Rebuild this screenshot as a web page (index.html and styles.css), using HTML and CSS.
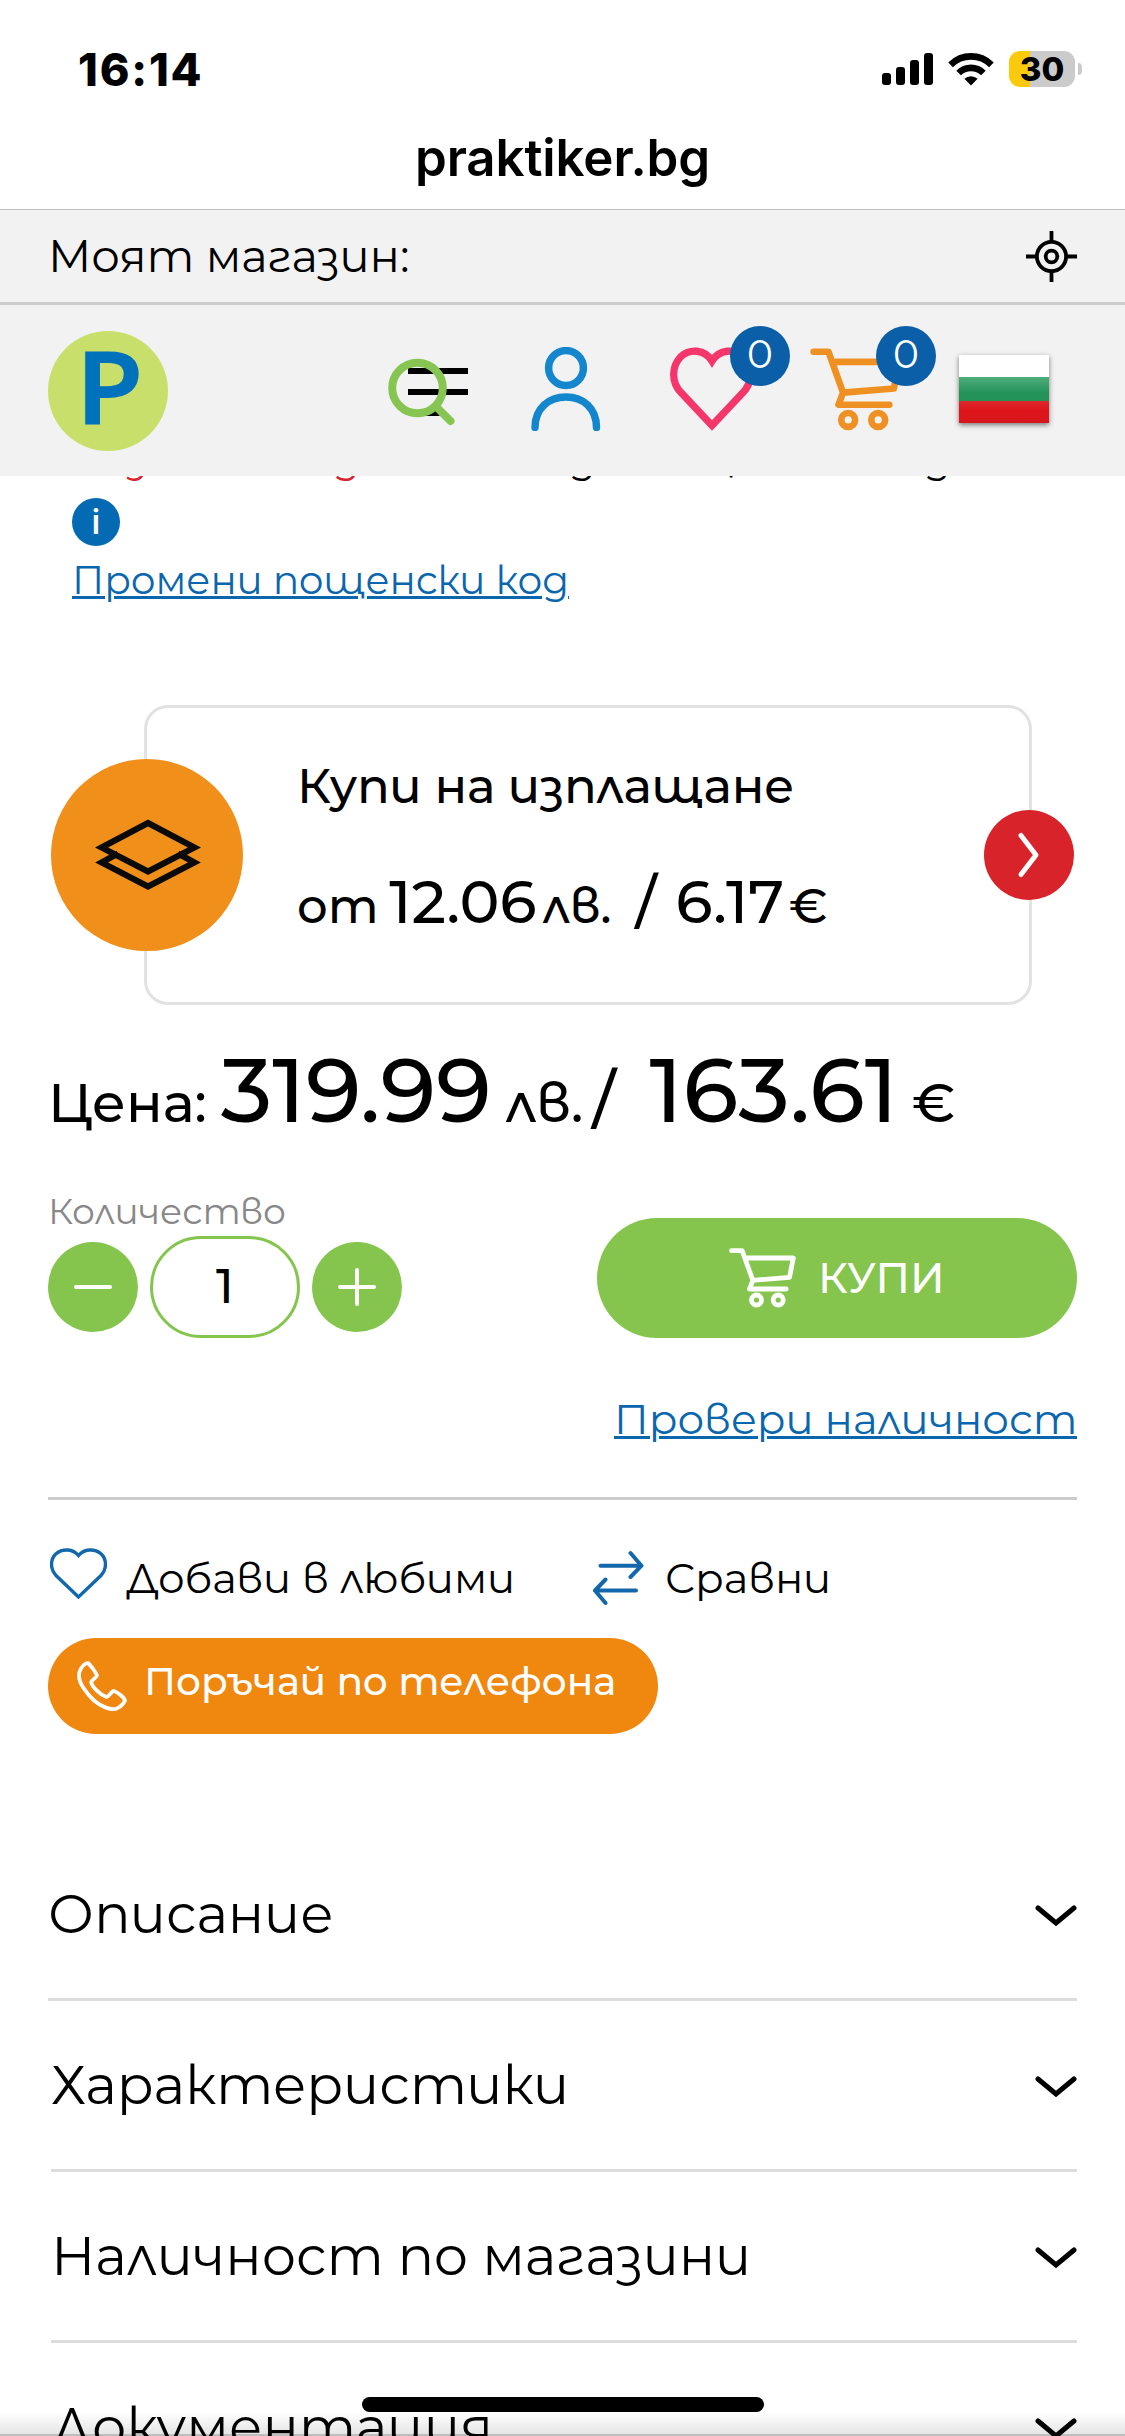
FILE: index.html
```html
<!DOCTYPE html>
<html lang="bg">
<head>
<meta charset="utf-8">
<title>praktiker.bg</title>
<link rel="stylesheet" href="styles.css">
</head>
<body>
<svg class="defs" aria-hidden="true">
  <symbol id="cart" viewBox="0 0 67 60">
    <g fill="none" stroke="currentColor" stroke-width="4.8" stroke-linecap="round" stroke-linejoin="round">
      <path d="M2.5 2.700H13.200L23.800 32.300L60.500 29.300L64.300 10H16.800M23.800 32.300L20.500 41H57.200"/>
      <circle cx="27.500" cy="52" r="5"/><circle cx="49.200" cy="52" r="5"/>
    </g>
  </symbol>
  <symbol id="down" viewBox="0 0 42 22">
    <path d="M3 3L21 18L39 3" fill="none" stroke="#000" stroke-width="5" stroke-linecap="round" stroke-linejoin="miter"/>
  </symbol>
</svg>

<div class="screen">
  <div class="status">
    <span class="clock">16:14</span>
    <div class="status-icons">
      <svg width="51" height="32" viewBox="0 0 51 32"><rect x="0" y="20" width="9" height="12" rx="3"/><rect x="14" y="14" width="9" height="18" rx="3"/><rect x="28" y="7" width="9" height="25" rx="3"/><rect x="42" y="0" width="9" height="32" rx="3"/></svg>
      <svg class="wifi" width="46" height="34" viewBox="0 0 46 34"><g fill="none" stroke="#000" stroke-width="6.6"><path d="M2.6 12.8A29 29 0 0 1 43.4 12.8"/><path d="M10.6 21A17.6 17.6 0 0 1 35.4 21"/></g><path d="M23 33.5L16.4 26.8A9.6 9.6 0 0 1 29.6 26.8Z"/></svg>
      <div class="battery"><span>30</span></div>
      <div class="nub"></div>
    </div>
  </div>
  <div class="url">praktiker.bg</div>

  <div class="store">
    <span>Моят магазин:</span>
    <svg width="51" height="51" viewBox="0 0 51 51" fill="none" stroke="#000" stroke-width="3.8"><circle cx="25.5" cy="25.5" r="14.6"/><circle cx="25.5" cy="25.5" r="5.8"/><path d="M25.5 0V10M25.5 41V51M0 25.5H10M41 25.5H51"/></svg>
  </div>

  <header class="header">
    <div class="logo"><span>P</span></div>
    <svg class="i-search" width="84" height="84" viewBox="386 347 84 84"><path d="M408 367H468V373H408ZM408 388H468V394H408ZM425 415H440L436 409Z"/><g fill="none" stroke="#86c552" stroke-width="8" stroke-linecap="round"><circle cx="417.5" cy="387" r="25.3"/><path d="M436.5 406L450.5 420"/></g></svg>
    <svg class="i-user" width="70" height="84" viewBox="531 347 70 84" fill="none" stroke="#1486cd" stroke-width="7.5" stroke-linecap="round"><circle cx="566" cy="368" r="17.4"/><path d="M535 427.5C535 408 549 397 566 397C583 397 596.500 408 596.500 427.500"/></svg>
    <div class="with-badge i-heart">
      <svg width="84" height="84" viewBox="0 0 84 84" fill="none" stroke="#f5366a" stroke-width="7.3"><path d="M42 78.500L11 45.500C1 35 1.500 19 11 9.500C20 1.500 34.500 2 42 14C49.500 2 64 1.500 73 9.500C82.500 19 83 35 73 45.500Z"/></svg>
      <span class="badge">0</span>
    </div>
    <div class="with-badge i-cart">
      <svg width="93" height="83"><use href="#cart"/></svg>
      <span class="badge">0</span>
    </div>
    <div class="flag"></div>
  </header>

  <main class="main">
    <div class="delivery"><p><b class="w1">з</b><b class="w2">д</b><span class="w3">д</span><span class="w4">ц</span><span>д</span></p></div>
    <div class="info">i</div>
    <a class="link postcode">Промени пощенски код</a>

    <section class="offer">
      <div class="offer-icon"><svg width="106" height="72" viewBox="0 0 106 72" fill="none" stroke="#0a0a0a" stroke-width="6"><path d="M6.500 28.500L53 4L99.500 28.500L53 52.500Z"/><path d="M23 34.500L6.500 43.500L53 67.500L99.500 43.500L83 34.500"/></svg></div>
      <h2>Купи на изплащане</h2>
      <p class="offer-price"><span class="from">от</span><b class="o1">12.06</b><span class="o2">лв.</span><i class="o3">/</i><b class="o4">6.17</b><span class="o5">€</span></p>
      <div class="offer-go"><svg width="26" height="48" viewBox="0 0 26 48" fill="none" stroke="#fff" stroke-width="5" stroke-linecap="round" stroke-linejoin="round"><path d="M5 4.500L20 24L5 43.500"/></svg></div>
    </section>

    <p class="price"><span>Цена:</span><b class="p1">319.99</b><span class="p2">лв.</span><i class="p3">/</i><b class="p4">163.61</b><span class="p5">€</span></p>

    <div class="buy-row">
      <div>
        <div class="qty-label">Количество</div>
        <div class="qty">
          <button><svg width="38" height="38" viewBox="0 0 38 38"><path d="M2 19H36"/></svg></button>
          <div class="count">1</div>
          <button><svg width="38" height="38" viewBox="0 0 38 38"><path d="M2 19H36M19 2V36"/></svg></button>
        </div>
      </div>
      <div class="buy"><svg width="67" height="60"><use href="#cart"/></svg><span>КУПИ</span></div>
    </div>
    <a class="link stock">Провери наличност</a>

    <div class="actions">
      <svg class="a-heart" width="57" height="52" viewBox="0 0 57 52" fill="none" stroke="#1268ab" stroke-width="3.4"><path d="M28.500 49L6 27.500C0 21 0 11.500 6 5.800C13 0 23 1 28.500 7.500C34 1 44 0 51 5.800C57 11.500 57 21 51 27.500Z"/></svg>
      <span class="fav">Добави в любими</span>
      <svg class="a-cmp" width="52" height="56" viewBox="592 1550 52 56" fill="none" stroke="#1268ab" stroke-width="4" stroke-linecap="round" stroke-linejoin="round"><path d="M600.500 1565.700H641.500M630.500 1553L641.500 1565.700L630.500 1577M636 1590.500H595M605.500 1579.500L595 1590.500L605.500 1603"/></svg>
      <span>Сравни</span>
    </div>
    <div class="phone">
      <svg width="50" height="50" viewBox="0 0 50 50" fill="none" stroke="#fff" stroke-width="3.8" stroke-linejoin="round"><path d="M3.500 8.500C5 5.500 8 2.500 10.800 2C12.500 3 18 10 20 14.500C19.500 17 14.500 18.500 14.200 21.500C15.500 26 23 34 29.500 36C32 35.500 33 32 36.500 29.800C40 31 47 36 48 39.500C46.500 43 42.500 46.500 38.500 48C33 49 24 45.500 17 39.500C9 32 2 22 2 15C2 12 2.500 10 3.500 8.500Z"/></svg>
      <span>Поръчай по телефона</span>
    </div>

    <div class="acc">
      <div class="acc-item first"><span>Описание</span><svg width="42" height="22"><use href="#down"/></svg></div>
      <div class="acc-item"><span>Характеристики</span><svg width="42" height="22"><use href="#down"/></svg></div>
      <div class="acc-item"><span>Наличност по магазини</span><svg width="42" height="22"><use href="#down"/></svg></div>
      <div class="acc-item"><span>Документация</span><svg width="42" height="22"><use href="#down"/></svg></div>
    </div>
  </main>
  <div class="shade"></div>
  <div class="home"></div>
</div>
</body>
</html>
```
FILE: styles.css
```css
* { box-sizing: border-box; }
body { margin: 0; background: #fff; color: #000; font-family: Montserrat, Inter, sans-serif; }
p, h2 { margin: 0; }
svg { display: block; flex: none; }
.defs { position: absolute; width: 0; height: 0; }
.screen { position: relative; width: 1125px; height: 2436px; overflow: hidden; background: #fff; }

.status { display: flex; justify-content: space-between; align-items: center; height: 138px; padding: 0 43px 0 78px; font-family: Inter, sans-serif; }
.clock { font-size: 45px; font-weight: 800; letter-spacing: 1.8px; }
.status-icons { display: flex; align-items: center; }
.wifi { margin: 0 15px; }
.battery { width: 66px; height: 36px; border-radius: 11px; background: linear-gradient(90deg, #fcca0c 21px, #cbcbcb 21px); font-size: 33px; font-weight: 800; line-height: 36px; text-align: center; }
.nub { width: 4px; height: 12px; margin-left: 3px; border-radius: 0 6px 6px 0; background: #cbcbcb; }
.url { height: 71px; line-height: 39px; text-align: center; font-family: Inter, sans-serif; font-size: 51px; font-weight: 600; letter-spacing: -0.1px; }

.store { display: flex; justify-content: space-between; align-items: center; height: 96px; padding: 0 48px; background: #f2f2f2; border-top: 1px solid #bfbfbf; border-bottom: 3px solid #ccc; font-size: 45px; line-height: 92px; }

.header { display: flex; align-items: center; height: 171px; padding: 1px 75px 0 48px; background: #f2f2f2; }
.logo { width: 120px; height: 120px; border-radius: 50%; background: #c8df6b; color: #0072bc; font: 600 99px/109px "Open Sans", sans-serif; text-align: center; }
.logo span { display: inline-block; padding-left: 3px; transform: scaleX(1.1); -webkit-text-stroke: 1.8px #0072bc; }
.i-search { margin: -3px 0 0 218px; }
.i-user { margin: -4px 0 0 61px; }
.with-badge { position: relative; margin-top: -4px; }
.i-heart { margin-left: 69px; }
.i-cart { margin-left: 56px; color: #ef9023; }
.badge { position: absolute; top: -21px; right: -36px; width: 60px; height: 60px; border-radius: 50%; background: #0a5fa8; color: #fff; font-size: 39px; line-height: 57px; text-align: center; }
.i-cart .badge { top: -22px; right: -33px; }
.flag { width: 90px; height: 68px; margin: -4px 0 0 56px; background: linear-gradient(#fff 0 22px, #4fad7c 22px, #23935a 38px, #23935a 46px, #d9282c 46px, #e0141b 56px, #d5171d 68px); box-shadow: 0 2px 5px rgba(0, 0, 0, .5); }

.main { padding: 0 48px; }
.delivery { height: 22px; margin: 0 -48px; overflow: hidden; }
.delivery p { display: flex; margin-top: -41px; padding-left: 127px; font-size: 39px; line-height: 48px; }
.delivery b { font-weight: 400; color: #d8232a; }
.w1 { width: 206px; } .w2 { width: 236px; } .w3 { width: 138px; } .w4 { width: 217px; }
.info { width: 48px; height: 48px; margin-left: 24px; border-radius: 50%; background: #036ab3; color: #fff; font: 600 35px/46px "Open Sans", sans-serif; text-align: center; }
.link { display: block; line-height: 54px; color: #0a66ad; text-decoration: underline; text-decoration-thickness: 3px; }
.postcode { margin: 7px 0 0 24px; font-size: 39px; letter-spacing: -0.05px; }

.offer { position: relative; width: 888px; height: 300px; margin: 98px 0 0 96px; padding: 48px 0 0 150px; border: 3px solid #e2e2e2; border-radius: 24px; }
.offer h2 { font-size: 48px; font-weight: 500; line-height: 60px; letter-spacing: -0.05px; }
.offer-price { display: flex; align-items: baseline; margin-top: 50px; font-size: 48px; font-weight: 500; line-height: 48px; }
.offer-price b { font-size: 60px; font-weight: 500; line-height: 72px; }
.offer-price i { font-size: 60px; font-style: normal; }
.o1 { margin-left: 11px; } .o2 { margin-left: 6px; } .o3 { margin-left: 24px; } .o4 { margin-left: 19px; } .o5 { margin-left: 5px; }
.offer-icon, .offer-go { position: absolute; display: flex; align-items: center; justify-content: center; border-radius: 50%; }
.offer-icon { left: -96px; top: 51px; width: 192px; height: 192px; background: #f08f1a; padding-left: 2px; }
.offer-go { right: -45px; top: 102px; width: 90px; height: 90px; background: #d8232a; }

.price { display: flex; align-items: baseline; margin-top: 35px; font-size: 54px; font-weight: 500; line-height: 54px; }
.price b { font-size: 90px; font-weight: 500; line-height: 100px; }
.price i { font-style: normal; font-size: 66px; }
.p1 { margin-left: 14px; } .p2 { margin-left: 14px; } .p3 { margin-left: 9px; } .p4 { margin-left: 34px; } .p5 { margin-left: 14px; }

.buy-row { display: flex; justify-content: space-between; height: 146px; margin-top: 52px; }
.qty-label { padding-top: 1px; font-size: 36px; line-height: 36px; color: #888; letter-spacing: -0.1px; }
.qty { display: flex; align-items: center; gap: 12px; margin-top: 7px; }
.qty button { display: flex; align-items: center; justify-content: center; width: 90px; height: 90px; padding: 0; border: 0; border-radius: 50%; background: #85c54d; }
.qty path { stroke: #fff; stroke-width: 4; stroke-linecap: round; }
.count { width: 150px; height: 102px; border: 3px solid #85c54d; border-radius: 51px; font-size: 48px; font-weight: 500; line-height: 94px; text-align: center; }
.buy { display: flex; align-items: center; width: 480px; height: 120px; margin-top: 26px; padding-left: 132px; border-radius: 60px; background: #85c54d; color: #fff; font-size: 42px; font-weight: 500; }
.buy span { margin-left: 22px; }
.stock { margin-top: 54px; text-align: right; font-size: 42px; }

.actions { display: flex; margin-top: 51px; padding-top: 48px; border-top: 3px solid #ccc; font-size: 42px; line-height: 60px; }
.a-heart { margin-left: 2px; }
.fav { width: 394px; margin-left: 19px; }
.a-cmp { margin: 2px 21px 0 72px; }
.phone { display: flex; align-items: center; width: 610px; height: 96px; margin-top: 30px; padding-left: 29px; border-radius: 48px; background: #f0870f; color: #fff; font-size: 39px; font-weight: 500; }
.phone span { margin: -10px 0 0 17px; }

.acc { margin-top: 96px; font-size: 54px; }
.acc-item { display: flex; align-items: center; justify-content: space-between; height: 171px; margin-left: 3px; border-bottom: 3px solid #ddd; line-height: 165px; }
.acc-item svg { margin-top: 3px; }
.acc-item.first { margin-left: 0; }

.shade { position: absolute; left: 0; right: 0; bottom: 0; height: 24px; background: linear-gradient(rgba(0, 0, 0, 0), rgba(0, 0, 0, .1)); border-bottom: 2px solid rgba(0, 0, 0, .25); }
.home { position: absolute; left: 362px; top: 2397px; width: 402px; height: 15px; border-radius: 8px; background: #000; }
```
